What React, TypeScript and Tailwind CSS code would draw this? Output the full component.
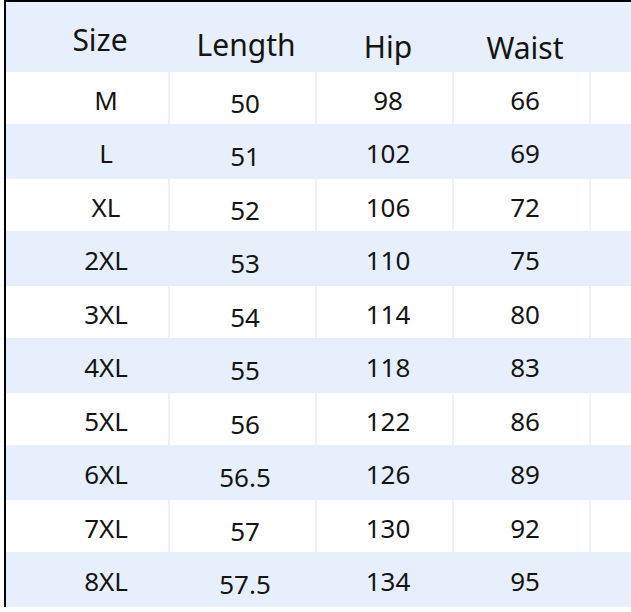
import React from "react";

const rows: [string, string, string, string][] = [
  ["M", "50", "98", "66"],
  ["L", "51", "102", "69"],
  ["XL", "52", "106", "72"],
  ["2XL", "53", "110", "75"],
  ["3XL", "54", "114", "80"],
  ["4XL", "55", "118", "83"],
  ["5XL", "56", "122", "86"],
  ["6XL", "56.5", "126", "89"],
  ["7XL", "57", "130", "92"],
  ["8XL", "57.5", "134", "95"],
];

const gridCols = "grid grid-cols-[162px_145px_135px_135px_1fr] gap-x-[2px]";

export default function App() {
  return (
    <div
      className="w-[631px] h-[612px] bg-white pl-[4px] overflow-hidden text-[#141414]"
      style={{ fontFamily: '"Noto Sans", "Liberation Sans", sans-serif' }}
    >
      <div className="border-l-2 border-t-2 border-black bg-[#e6effb] flex flex-col">
        <div className={`${gridCols} h-[70px] text-[30px]`}>
          <div className="flex items-center justify-center pl-[26px] pt-[4px]">Size</div>
          <div className="flex items-center justify-center pl-[7px] pt-[14px]">Length</div>
          <div className="flex items-center justify-center pl-[7px] pt-[18px]">Hip</div>
          <div className="flex items-center justify-center pl-[7px] pt-[20px]">Waist</div>
          <div />
        </div>
        {rows.map((r, i) => {
          const white = i % 2 === 0;
          return (
            <div
              key={r[0]}
              className={
                white
                  ? `${gridCols} h-[52px] bg-[#edf2f9] text-[26px]`
                  : `${gridCols} h-[55px] bg-[#e6effb] text-[26px]`
              }
            >
              <div className={`flex items-center justify-center pl-[38px] pt-[4px] ${white ? "bg-white" : ""}`}>{r[0]}</div>
              <div className={`flex items-center justify-center pl-[5px] pt-[10px] ${white ? "bg-white" : ""}`}>{r[1]}</div>
              <div className={`flex items-center justify-center pl-[7px] pt-[4px] ${white ? "bg-white" : ""}`}>{r[2]}</div>
              <div className={`flex items-center justify-center pl-[7px] pt-[4px] ${white ? "bg-white" : ""}`}>{r[3]}</div>
              <div className={white ? "bg-white" : ""} />
            </div>
          );
        })}
      </div>
    </div>
  );
}
